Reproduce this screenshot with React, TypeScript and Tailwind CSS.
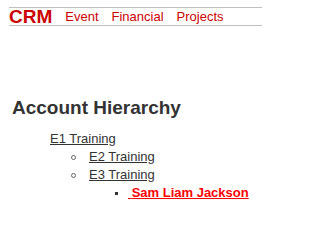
import React from "react";

export default function App() {
  return (
    <div className="w-[262px] h-[212px] overflow-hidden bg-white font-['Liberation_Sans',Arial,sans-serif]">
      <div className="ml-[9px] mt-[7px] h-[19px] border-y border-[#c0c0c0] flex items-start">
        <span className="text-[19px] font-bold leading-[17px] text-[#cc0000]">CRM</span>
        <nav className="ml-[13px] flex gap-[13px] text-[13px] leading-[17px] text-[#cc0000]">
          <a>Event</a>
          <a>Financial</a>
          <a>Projects</a>
        </nav>
      </div>
      <h1 className="ml-[12px] mt-[71px] text-[19px] font-bold leading-[22px] text-[#333333]">
        Account Hierarchy
      </h1>
      <div className="mt-[11px] text-[13px] leading-[18px] text-[#333333]">
        <div className="ml-[50px]">
          <a className="underline">E1 Training</a>
        </div>
        <div className="ml-[71px] flex items-start">
          <span className="mt-[7px] mr-[13px] w-[5px] h-[5px] rounded-full border border-[#666666]" />
          <a className="underline">E2 Training</a>
        </div>
        <div className="ml-[71px] flex items-start">
          <span className="mt-[7px] mr-[13px] w-[5px] h-[5px] rounded-full border border-[#666666]" />
          <a className="underline">E3 Training</a>
        </div>
        <div className="ml-[115px] flex items-start">
          <span className="mt-[8px] mr-[10px] w-[3px] h-[3px] bg-[#333333]" />
          <a className="underline font-bold text-[#ff0000]">{"\u00a0"}Sam Liam Jackson</a>
        </div>
      </div>
    </div>
  );
}
